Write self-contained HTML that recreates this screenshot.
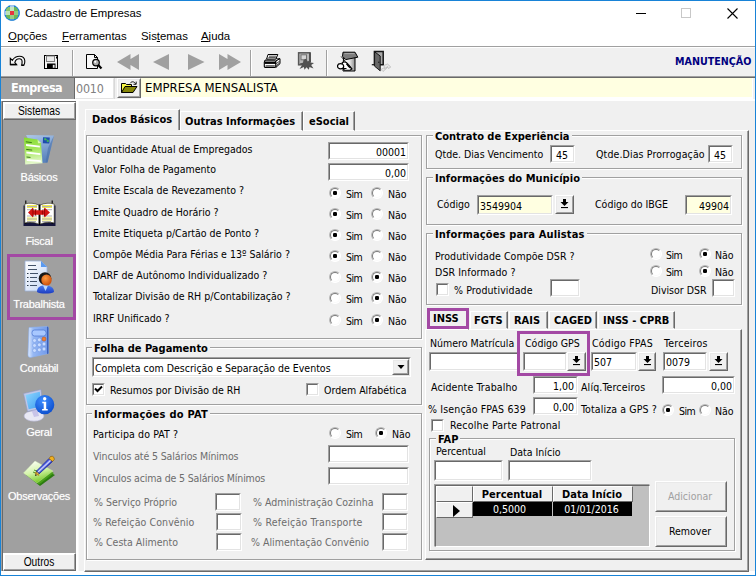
<!DOCTYPE html><html><head><meta charset="utf-8"><title>Cadastro de Empresas</title><style>

html,body{margin:0;padding:0}
body{width:756px;height:576px;overflow:hidden;background:#f0f0f0;position:relative;font-family:'DejaVu Sans Condensed','Liberation Sans',sans-serif;font-size:10.5px;color:#000}
div,span,svg{position:absolute;box-sizing:content-box}
.t{white-space:nowrap;line-height:13px;height:13px}
.b{font-weight:bold;font-size:11px}
.g{color:#6d6d6d}
.sk{border:1px solid;border-color:#696969 #e3e3e3 #e3e3e3 #696969;margin:1px}
.sk:before{content:"";position:absolute;left:-2px;top:-2px;right:-2px;bottom:-2px;border:1px solid;border-color:#a0a0a0 #fff #fff #a0a0a0;pointer-events:none}
.rb{background:#f0f0f0;border:1px solid;border-color:#e9e9e9 #a0a0a0 #a0a0a0 #e9e9e9;margin:1px}
.rb:before{content:"";position:absolute;left:-2px;top:-2px;right:-2px;bottom:-2px;border:1px solid;border-color:#fff #696969 #696969 #fff}
.gb{border:1px solid #a0a0a0;box-shadow:1px 1px 0 0 #fff, inset 1px 1px 0 0 #fff}
.gt{background:#f0f0f0;padding:0 2px;height:4px;line-height:4px}
.rd{width:10px;height:10px;border-radius:50%;background:#fff;border:1px solid;border-color:#b8b8b8 #fff #fff #b8b8b8}
.rd:before{content:"";position:absolute;left:0;top:0;width:8px;height:8px;border-radius:50%;border:1px solid;border-color:#7c7c7c #fafafa #fafafa #7c7c7c}
.rd i{position:absolute;left:3px;top:3px;width:4px;height:4px;background:#000;border-radius:1.3px}
.sm{letter-spacing:-0.6px}
.ck{width:9px;height:9px;background:#fff;border:1px solid;border-color:#696969 #e3e3e3 #e3e3e3 #696969;margin:1px}
.ck:before{content:"";position:absolute;left:-2px;top:-2px;right:-2px;bottom:-2px;border:1px solid;border-color:#a0a0a0 #fff #fff #a0a0a0}
.sb{color:#fff;font-family:'Liberation Sans',sans-serif;font-size:11px;letter-spacing:-0.25px;text-align:center;width:72px;left:3px;text-shadow:0 0 1px rgba(255,255,255,.55)}
.mn{font-family:'Liberation Sans',sans-serif;font-size:11.4px;line-height:15px;height:15px}
.mn u{text-decoration:underline}

</style></head><body>
<div style="left:0;top:0;width:754px;height:574px;border:1px solid #1883d7;z-index:50;pointer-events:none"></div>
<div style="left:1px;top:1px;width:754px;height:45px;background:#fff"></div>
<svg style="left:4px;top:5px" width="16" height="16" viewBox="0 0 16 16"><defs><clipPath id="cc"><circle cx="8" cy="8" r="7.9"/></clipPath><clipPath id="cg"><circle cx="8" cy="8" r="6.9"/></clipPath></defs>
<g clip-path="url(#cc)"><rect width="16" height="16" fill="#1a80d6"/><rect x="2" y="2" width="12" height="12" fill="#6cb856" clip-path="url(#cg)"/>
<rect x="6" y="0" width="4" height="2" fill="#a8c8f0"/><rect x="0" y="6" width="2" height="4" fill="#a4c4ee"/><rect x="14" y="6" width="2" height="4" fill="#4c98dc"/><rect x="6" y="14" width="4" height="2" fill="#4c98dc"/>
<rect x="6" y="2" width="4" height="4" fill="#c4e6c0"/><rect x="2" y="6" width="4" height="4" fill="#bce2b4"/><rect x="10" y="6" width="4" height="4" fill="#94cc80"/><rect x="6" y="10" width="4" height="4" fill="#98d084"/>
<rect x="2" y="2" width="4" height="4" fill="#84c46c" clip-path="url(#cg)"/>
<rect x="6" y="6" width="4" height="4" fill="#e8363e"/></g></svg>
<span class="t mn" style="left:25px;top:6px">Cadastro de Empresas</span>
<div style="left:636px;top:13px;width:10px;height:1px;background:#000"></div>
<div style="left:681px;top:8px;width:8px;height:8px;border:1px solid #c8c8c8"></div>
<svg style="left:726.5px;top:7.5px" width="11" height="11" viewBox="0 0 11 11"><path d="M0.5 0.5L10.5 10.5M10.5 0.5L0.5 10.5" stroke="#000" stroke-width="1.1"/></svg>
<span class="t mn" style="left:8px;top:29px"><u>O</u>pções</span>
<span class="t mn" style="left:62px;top:29px"><u>F</u>erramentas</span>
<span class="t mn" style="left:141px;top:29px">Sis<u>t</u>emas</span>
<span class="t mn" style="left:201px;top:29px"><u>A</u>juda</span>
<div style="left:1px;top:46px;width:754px;height:1px;background:#a0a0a0"></div>
<div style="left:1px;top:47px;width:754px;height:1px;background:#fff"></div>
<div style="left:72px;top:50px;width:1px;height:26px;background:#a0a0a0"></div><div style="left:73px;top:50px;width:1px;height:26px;background:#fff"></div>
<div style="left:250px;top:50px;width:1px;height:26px;background:#a0a0a0"></div><div style="left:251px;top:50px;width:1px;height:26px;background:#fff"></div>
<div style="left:326px;top:50px;width:1px;height:26px;background:#a0a0a0"></div><div style="left:327px;top:50px;width:1px;height:26px;background:#fff"></div>
<svg style="left:9px;top:55px" width="18" height="12" viewBox="0 0 18 12"><path d="M1.3 3.3 L1.3 9.6 L7.6 9.6 L5.8 7.6 C6.5 5.2 8.4 3.8 10.3 3.8 C12.2 3.8 13.2 5 13.1 6.8 C13.1 8.4 12.9 9.4 12.6 10.3 L14.9 10.3 C15.6 9 15.9 7.5 15.8 5.8 C15.5 3 13.5 1.3 10.5 1.3 C7.5 1.3 5 2.8 3.4 5.3 Z" fill="#f4f4f4" stroke="#000" stroke-width="1.1" stroke-linejoin="miter"/><path d="M1.3 9.6H7.6M12.6 10.3H14.9" stroke="#000" stroke-width="1.5"/></svg>
<svg style="left:44px;top:55px" width="14" height="14" viewBox="0 0 14 14"><rect x="0.5" y="0.5" width="13" height="13" fill="#f4f4f4" stroke="#000"/><rect x="2.5" y="1" width="8" height="5.5" fill="#ececec" stroke="#808080" stroke-width="1"/><rect x="3" y="8.5" width="8.5" height="5" fill="#000"/><rect x="8.8" y="9.8" width="1.8" height="3" fill="#e8e8e8"/><rect x="12" y="1.5" width="1" height="2" fill="#000"/></svg>
<svg style="left:86px;top:54px" width="17" height="16" viewBox="0 0 17 16"><path d="M0.5 0.5H8.5L11.5 3.5V14.5H0.5z" fill="#f8f8f8" stroke="#000"/><path d="M8.5 0.5V3.5H11.5" fill="none" stroke="#000"/><circle cx="10" cy="8.6" r="3.3" fill="#b0b0b0" stroke="#000" stroke-width="1.2"/><circle cx="9.2" cy="7.8" r="1.1" fill="#fff"/><path d="M12.2 11L15.5 14.5" stroke="#000" stroke-width="2.2"/></svg>
<svg style="left:117px;top:54px" width="22" height="16" viewBox="0 0 22 16"><path d="M13.5 0V16L0 8z M22 0V16L8.5 8z" fill="#a0a0a0"/></svg>
<svg style="left:153px;top:54px" width="16" height="16" viewBox="0 0 16 16"><path d="M16 0V16L0 8z" fill="#a0a0a0"/></svg>
<svg style="left:188px;top:54px" width="17" height="16" viewBox="0 0 17 16"><path d="M0 0V16L16.5 8z" fill="#a0a0a0"/></svg>
<svg style="left:219px;top:54px" width="22" height="16" viewBox="0 0 22 16"><path d="M0 0V16L13.5 8z M8.5 0V16L22 8z" fill="#a0a0a0"/></svg>
<svg style="left:263px;top:53px" width="18" height="16" viewBox="0 0 18 16"><path d="M3.6 6.1L1.3 8H12.9L17 5.7L14.5 5.7z" fill="#fff" stroke="#000" stroke-width=".9"/><path d="M5 1.5H14.8L12.9 6.1H3.6z" fill="#fff" stroke="#000" stroke-width="1"/><path d="M6 3.2H13.4M5.4 4.6H12.8" stroke="#000" stroke-width=".7"/><rect x="1.3" y="8" width="11.6" height="6.4" rx="1.2" fill="#fff" stroke="#000" stroke-width="1.1"/><path d="M12.9 8L17 5.7V10.7L12.9 14.4z" fill="#fff" stroke="#000" stroke-width="1"/><rect x="1.6" y="9" width="11.3" height="1.9" fill="#000"/><path d="M2.6 12.9H11.8" stroke="#000" stroke-width=".9"/><path d="M13.4 10.6L16.6 8.2M13.4 12.6L16.6 10" stroke="#000" stroke-width=".8"/></svg>
<svg style="left:297px;top:52px" width="18" height="18" viewBox="0 0 18 18"><rect x="1.6" y="0.8" width="11.2" height="12" fill="#b8b8b8" stroke="#585858" stroke-width="1.5"/><path d="M13.2 0.5V10" stroke="#404040" stroke-width="1.2"/><rect x="4" y="2.8" width="5.5" height="5" fill="#d4d4d4" stroke="#707070" stroke-width="1"/><path d="M9 6.8L10.8 9.5L14 7.2L13.3 10.6L17 11L14.2 13L16.5 16.5L12.5 15L11.8 17.8L9.5 15.2L7.5 17.8L6.8 15L2.5 17L5 13.2L2.5 11.5L6 10.8L6.5 8z" fill="#505050"/></svg>
<svg style="left:337px;top:51px" width="22" height="21" viewBox="0 0 22 21"><defs><linearGradient id="np" x1="0" y1="0" x2="1" y2="0"><stop offset="0" stop-color="#fff"/><stop offset=".55" stop-color="#e8e8e8"/><stop offset="1" stop-color="#8c8c8c"/></linearGradient></defs><path d="M6.5 7.2L18 6.3V20H6z" fill="url(#np)" stroke="#000" stroke-width="1"/><path d="M6 1.2H18L20.8 6.2L8.7 8.6L5.5 5.3z" fill="#7c7c7c" stroke="#000" stroke-width="1"/><path d="M7.5 2.6H17.5" stroke="#a8a8a8" stroke-width="1"/><path d="M4.2 5.5L8.5 10.5" stroke="#000" stroke-width=".9"/><path d="M5.2 11.6C7.5 10 10 11.5 11.5 13.5L15 17.8L13.2 19.2H7.5L6 17.6z" fill="#fff" stroke="#000" stroke-width="1.1"/><ellipse cx="3.6" cy="15.2" rx="3.1" ry="2.6" fill="#fff" stroke="#000" stroke-width="1.2"/><path d="M9.5 12.5C10.5 14 11.5 15.5 13.8 17" stroke="#000" stroke-width="1.5" fill="none"/><path d="M5 17.5H9.5" stroke="#000" stroke-width="1"/></svg>
<svg style="left:371px;top:50px" width="22" height="22" viewBox="0 0 22 22"><path d="M3.4 1.5H12.2V14.7H3.4z" fill="#a8a8a8" stroke="#181818" stroke-width="1.5"/><path d="M3.6 1.8L9.2 6V20.8L3.6 16.2z" fill="#686868" stroke="#181818" stroke-width="1"/><path d="M0.8 14.7H3.2" stroke="#181818" stroke-width="1.2"/><circle cx="7.8" cy="12.2" r=".7" fill="#181818"/><path d="M10 19.5L13.5 17.5L12.8 15.5L16.5 14L19.8 17L17.5 18.5L16.8 17.2L12 21.5z" fill="#e8e8e8" stroke="#b4b4b4" stroke-width=".7"/><path d="M13 19l4-2.5" stroke="#c0c0c0" stroke-width="1"/></svg>
<span class="t b" style="left:675px;top:55px;color:#000080;font-size:10.65px">MANUTENÇÃO</span>
<div style="left:1px;top:76px;width:754px;height:1px;background:#a0a0a0"></div>
<div style="left:1px;top:77px;width:754px;height:1px;background:#696969"></div>
<div style="left:1px;top:99px;width:754px;height:2px;background:#fff"></div>
<div style="left:1px;top:78px;width:73px;height:21px;background:#a0a0a0"></div>
<span class="t b" style="left:11px;top:80px;font-size:12.5px;letter-spacing:-0.55px;line-height:16px;height:16px;color:#fff">Empresa</span>
<div style="left:74px;top:78px;width:1px;height:21px;background:#696969"></div>
<div style="left:75px;top:78px;width:37px;height:19px;background:#fff;border:1px solid;border-color:#fff #e3e3e3 #e3e3e3 #fff"><span class="t" style="left:0px;top:2px;font-size:12.4px;letter-spacing:-0.2px;line-height:16px;height:16px;color:#808080">0010</span></div>
<div style="left:114px;top:78px;width:1px;height:21px;background:#d8d8d8"></div>
<div style="left:141px;top:78px;width:611px;height:19px;background:#ffffe1;border-bottom:2px solid #fff;border-right:1px solid #fff"><span class="t" style="left:4px;top:2px;font-size:13px;line-height:16px;height:16px">EMPRESA MENSALISTA</span></div>
<div class="rb " style="left:117px;top:78px;width:20px;height:16px"><svg style="left:2px;top:1px" width="17" height="13" viewBox="0 0 17 13"><path d="M0.5 11.5V2.5H4.5L5.5 3.5H10.5V5.5" fill="#f6f644" stroke="#000"/><path d="M0.5 11.5L4 5.5H16L12 11.5z" fill="#868608" stroke="#000"/><path d="M9.2 2.2C10.6 0.2 13.2 0.3 14.6 2.8" fill="none" stroke="#000" stroke-width=".9"/><path d="M15.2 0.6V3.3H12.5" fill="none" stroke="#000" stroke-width=".9"/></svg></div>
<div style="left:1px;top:101px;width:75px;height:470px;background:#a0a0a0"></div>
<div style="left:2px;top:101px;width:74px;height:1px;background:#696969"></div><div style="left:2px;top:101px;width:1px;height:470px;background:#696969"></div>
<div style="left:3px;top:102px;width:71px;height:16px;background:#f0f0f0;border:1px solid;border-color:#fff #696969 #696969 #fff;box-shadow:inset -1px -1px 0 #a0a0a0,inset 1px 1px 0 #fff"></div>
<span class="t" style="left:3px;width:72px;text-align:center;top:105px;font-family:'Liberation Sans',sans-serif;font-size:11px;transform:scale(.93,1.12);transform-origin:50% 80%">Sistemas</span>
<div style="left:3px;top:553px;width:71px;height:16px;background:#f0f0f0;border:1px solid;border-color:#fff #696969 #696969 #fff;box-shadow:inset -1px -1px 0 #a0a0a0,inset 1px 1px 0 #fff"></div>
<span class="t" style="left:3px;width:72px;text-align:center;top:556px;font-family:'Liberation Sans',sans-serif;font-size:11px;transform:scale(.93,1.12);transform-origin:50% 80%">Outros</span>
<span class="t sb" style="top:171px">Básicos</span>
<span class="t sb" style="top:235px">Fiscal</span>
<span class="t sb" style="top:298px">Trabalhista</span>
<span class="t sb" style="top:362px">Contábil</span>
<span class="t sb" style="top:426px">Geral</span>
<span class="t sb" style="top:490px">Observações</span>
<div style="left:7px;top:254px;width:63px;height:60px;border:3px solid #a349a4"></div>
<svg style="left:23px;top:134px" width="32" height="32" viewBox="0 0 32 32">
<defs><linearGradient id="b1" x1="0" y1="0" x2="0.3" y2="1"><stop offset="0" stop-color="#aec8ea"/><stop offset="1" stop-color="#5a84bd"/></linearGradient>
<linearGradient id="g1" x1="0" y1="0" x2="0.1" y2="1"><stop offset="0" stop-color="#86dc30"/><stop offset=".5" stop-color="#a8e860"/><stop offset="1" stop-color="#e4f8cc"/></linearGradient></defs>
<path d="M3 1L31 1.5L24.5 28.5L19 29z" fill="url(#b1)"/>
<path d="M25 14L31 1.5L24.5 28.5L22.5 28.7z" fill="#4a70a8" opacity=".6"/>
<path d="M20 3.2L26.8 3.5L26.3 9.5L19.8 9.2z" fill="#1d4cae"/>
<path d="M21.5 4.5h1.5v1.5h-1.5zM24 6.2h1.5v1.5h-1.5zM22.8 5.6l1.5 .1" fill="#3fb85a" stroke="#3fb85a" stroke-width=".6"/>
<path d="M1 3.5L14.5 5.6L18 9L19.5 29.3L2.2 30.4z" fill="url(#g1)"/>
<path d="M14.5 5.6L15 9.2L18 9z" fill="#d8f5b0"/>
<path d="M2.8 7.8l6 .8" stroke="#3a7a18" stroke-width="1" fill="none"/>
<path d="M3 10L16.8 11.8L16.9 13.6L3.1 12z" fill="#fff"/>
<path d="M3.2 15.4l6 .7" stroke="#3a7a18" stroke-width="1" fill="none"/>
<path d="M3.3 17.6L17.3 19.2L17.4 21L3.4 19.6z" fill="#fff"/>
<path d="M3.5 23l4 .4" stroke="#3a7a18" stroke-width="1" fill="none"/>
<path d="M3.6 25L17.8 26.3L17.9 28.1L3.7 27z" fill="#fff"/>
</svg>
<svg style="left:23px;top:200px" width="33" height="27" viewBox="0 0 33 27">
<path d="M0.5 5.5H32.5V26H0.5z" fill="#16163c"/>
<path d="M2.8 0.5V24M29.2 0.5V24" stroke="#000" stroke-width="1.1"/>
<path d="M1.8 4C6 2.6 12 3 16 5.2V24.2C12 22.2 6 21.6 1.8 23z" fill="#ffffff" stroke="#303018" stroke-width=".6"/>
<path d="M31.2 4C27 2.6 21 3 17 5.2V24.2C21 22.2 27 21.6 31.2 23z" fill="#ffffff" stroke="#303018" stroke-width=".6"/>
<path d="M4 5.5h10M4 7.5h10M4 18h10M4 20h10M19 5.5h10M19 7.5h10M19 18h10M19 20h10" stroke="#f0ec50" stroke-width="1.1"/>
<path d="M4 9.7h10M4 16h10M19 9.7h10M19 16h10M4 6.5h10M19 6.5h10M4 19h10M19 19h10M4 21.5h9M19 21.5h9" stroke="#909090" stroke-width=".7"/>
<path d="M16.5 4.5V25" stroke="#000" stroke-width="1.6"/>
<path d="M5 12.5L10 7.5V10.3H21.5V7.5L27 12.5L21.5 17.5V14.7H10V17.5z" fill="#d41414"/>
<path d="M10 8.5v8M12.5 9.5v6M19.5 10.5v4M21.5 8.5v8" stroke="#9a0606" stroke-width="1.1"/>
</svg>
<svg style="left:24px;top:260px" width="32" height="34" viewBox="0 0 32 34">
<defs><linearGradient id="d1" x1="0" y1="0" x2="1" y2="1"><stop offset="0" stop-color="#ffffff"/><stop offset="1" stop-color="#c4d6f4"/></linearGradient>
<radialGradient id="h1" cx=".4" cy=".35" r=".7"><stop offset="0" stop-color="#ff9a40"/><stop offset="1" stop-color="#c84a08"/></radialGradient>
<linearGradient id="bd" x1="0" y1="0" x2="0" y2="1"><stop offset="0" stop-color="#4a7cf0"/><stop offset="1" stop-color="#1c3cc0"/></linearGradient></defs>
<path d="M1 1H17L23 7V31H1z" fill="url(#d1)" stroke="#9ab0d8" stroke-width=".8"/>
<path d="M17 1L23 7H17z" fill="#5a9af0"/>
<path d="M4 5.5h8M4 9.5h9M6 13.5h8M6 17.5h7M6 21.5h7M6 25.5h7" stroke="#42526a" stroke-width="1.1"/>
<path d="M3 13.5h1.5M3 17.5h1.5M3 21.5h1.5M3 25.5h1.5" stroke="#283848" stroke-width="1.2"/>
<path d="M13 32C13 27 16 25.5 21 25.5C26 25.5 30 27 30 32C27 34 16 34 13 32z" fill="url(#bd)"/>
<path d="M19 25.5L21.5 31L24 25.5z" fill="#b8d8ff"/>
<circle cx="21" cy="18.5" r="6.3" fill="#181818"/>
<ellipse cx="22.5" cy="20" rx="5.2" ry="5.6" fill="url(#h1)"/>
</svg>
<svg style="left:27px;top:326px" width="23" height="32" viewBox="0 0 23 32">
<defs><linearGradient id="c1" x1="0" y1="0" x2="1" y2="0"><stop offset="0" stop-color="#e0ecff"/><stop offset=".25" stop-color="#96b8f4"/><stop offset="1" stop-color="#7098e8"/></linearGradient></defs>
<path d="M2 1.5L20 0.5Q21.5 0.5 21.5 2V27.5L3.5 31.5Q1 31.5 1 29z" fill="url(#c1)" stroke="#8cb0f0" stroke-width=".6"/>
<path d="M20 0.5Q21.5 0.5 21.5 2V27.5L20 28z" fill="#3c60b8"/>
<rect x="5" y="4" width="14" height="6" rx="2.5" fill="#a8c8ff" stroke="#4a74d0" stroke-width=".7"/>
<g fill="#c8dcff" stroke="#6890e0" stroke-width=".5"><circle cx="7.5" cy="14.5" r="1.9"/><circle cx="12.3" cy="13.8" r="1.9"/>
<circle cx="7.5" cy="19.5" r="1.9"/><circle cx="12.3" cy="18.8" r="1.9"/><circle cx="17" cy="18" r="1.9"/>
<circle cx="7.5" cy="24.5" r="1.9"/><circle cx="12.3" cy="23.8" r="1.9"/><circle cx="17" cy="23" r="1.9"/></g>
<circle cx="17" cy="13" r="2" fill="#f08030" stroke="#c05010" stroke-width=".5"/>
</svg>
<svg style="left:23px;top:389px" width="34" height="34" viewBox="0 0 34 34">
<defs><linearGradient id="m1" x1="0" y1="0" x2="1" y2="1"><stop offset="0" stop-color="#90d8ff"/><stop offset="1" stop-color="#3c9cf0"/></linearGradient>
<radialGradient id="i1" cx=".4" cy=".3" r=".8"><stop offset="0" stop-color="#3c8cff"/><stop offset="1" stop-color="#0848c8"/></radialGradient></defs>
<ellipse cx="11" cy="27" rx="10" ry="5.2" fill="#e8e8f4" stroke="#b0b0d0" stroke-width=".6"/>
<path d="M8 20L14 19L16 27L11 28z" fill="#c8c4e8"/>
<path d="M0.5 4.5L18 0.5L20 19L4.5 22.5z" fill="#c0c8e8" stroke="#9098c0" stroke-width=".6"/>
<path d="M2.5 6L16.8 2.8L18.3 17.5L5.7 20.3z" fill="url(#m1)"/>
<circle cx="21.7" cy="15.7" r="9.6" fill="url(#i1)"/>
<circle cx="21.7" cy="9.8" r="1.7" fill="#fff"/>
<path d="M19.3 12.8h3.9v7.2h1.5v1.4h-5.6v-1.4h1.6v-5.8h-1.4z" fill="#fff"/>
</svg>
<svg style="left:22px;top:453px" width="34" height="34" viewBox="0 0 34 34">
<defs><linearGradient id="o1" x1="0.2" y1="0" x2="0.6" y2="1"><stop offset="0" stop-color="#ffffff"/><stop offset=".5" stop-color="#d4f4a8"/><stop offset="1" stop-color="#6cc418"/></linearGradient>
<linearGradient id="p1" x1="0" y1="0" x2="1" y2="1"><stop offset=".36" stop-color="#2434c4"/><stop offset=".45" stop-color="#5868e4"/><stop offset=".5" stop-color="#dce0ff"/><stop offset=".57" stop-color="#3444cc"/><stop offset=".66" stop-color="#0c1470"/></linearGradient></defs>
<path d="M4 22L15 13L33 22L18 33z" fill="#2c7c10"/>
<path d="M3 21L14 11L32 20L17 31.5z" fill="#48a018"/>
<path d="M1.5 20L13 8L31 18L15 30z" fill="url(#o1)" stroke="#d0e8b0" stroke-width=".4"/>
<path d="M12 17l5 2M11 19l4 1.6" stroke="#2c7c10" stroke-width=".8"/>
<path d="M13.5 22.5L14.5 18L17.5 20.5z" fill="#e8c060" stroke="#000" stroke-width=".5"/>
<path d="M13.2 22.8l1.2-.6-.5-.6z" fill="#000"/>
<path d="M14.5 18L27 5.5L30.5 8.5L17.5 20.5z" fill="url(#p1)" stroke="#1828a0" stroke-width=".7"/>
<path d="M27 5.5L28.5 3.5Q30.5 2.5 32 4.5L32.3 6.5L30.5 8.5z" fill="#f0b020" stroke="#805000" stroke-width=".6"/>
<path d="M13 19.5L17 22.5" stroke="#c09020" stroke-width="1.4"/>
</svg>
<div style="left:76px;top:101px;width:2px;height:470px;background:#fff"></div><div style="left:78px;top:101px;width:1px;height:470px;background:#f8f8f8"></div>
<div style="left:1px;top:571px;width:754px;height:4px;background:#fff"></div>
<div style="left:84px;top:130px;width:663px;height:440px;border:1px solid;border-color:#fff #696969 #696969 #fff;box-shadow:inset -1px -1px 0 #a0a0a0"></div>
<div style="left:85px;top:109px;width:93px;height:20px;border:1px solid;border-color:#fff #696969 transparent #fff;box-shadow:inset -1px 0 0 #a0a0a0"></div>
<div style="left:86px;top:130px;width:94px;height:1px;background:#f0f0f0"></div>
<div style="left:180px;top:111px;width:121px;height:18px;border:1px solid;border-color:#fff #696969 transparent #fff;box-shadow:inset -1px 0 0 #a0a0a0"></div>
<div style="left:303px;top:111px;width:50px;height:18px;border:1px solid;border-color:#fff #696969 transparent #fff;box-shadow:inset -1px 0 0 #a0a0a0"></div>
<span class="t b" style="left:92px;top:113px;">Dados Básicos</span>
<span class="t b" style="left:185px;top:115px;">Outras Informações</span>
<span class="t b" style="left:309px;top:115px;">eSocial</span>
<div class="gb" style="left:86px;top:135px;width:334px;height:202px"></div>
<span class="t " style="left:93px;top:143px;">Quantidade Atual de Empregados</span>
<span class="t " style="left:93px;top:163px;">Valor Folha de Pagamento</span>
<span class="t " style="left:93px;top:184px;">Emite Escala de Revezamento ?</span>
<span class="t " style="left:93px;top:206px;">Emite Quadro de Horário ?</span>
<span class="t " style="left:93px;top:227px;">Emite Etiqueta p/Cartão de Ponto ?</span>
<span class="t " style="left:93px;top:248px;">Compõe Média Para Férias e 13º Salário ?</span>
<span class="t " style="left:93px;top:269px;">DARF de Autônomo Individualizado ?</span>
<span class="t " style="left:93px;top:290px;">Totalizar Divisão de RH p/Contabilização ?</span>
<span class="t " style="left:93px;top:312px;">IRRF Unificado ?</span>
<div class="sk " style="left:328px;top:142px;width:77px;height:14px;background:#fff"><span class="t" style="right:1px;top:2px">00001</span></div>
<div class="sk " style="left:328px;top:163px;width:77px;height:14px;background:#fff"><span class="t" style="right:1px;top:2px">0,00</span></div>
<div class="rd" style="left:329px;top:187px"><i></i></div>
<span class="t sm" style="left:346px;top:188px;">Sim</span>
<div class="rd" style="left:371px;top:187px"></div>
<span class="t " style="left:388px;top:188px;">Não</span>
<div class="rd" style="left:329px;top:208px"><i></i></div>
<span class="t sm" style="left:346px;top:209px;">Sim</span>
<div class="rd" style="left:371px;top:208px"></div>
<span class="t " style="left:388px;top:209px;">Não</span>
<div class="rd" style="left:329px;top:229px"><i></i></div>
<span class="t sm" style="left:346px;top:230px;">Sim</span>
<div class="rd" style="left:371px;top:229px"></div>
<span class="t " style="left:388px;top:230px;">Não</span>
<div class="rd" style="left:329px;top:250px"><i></i></div>
<span class="t sm" style="left:346px;top:251px;">Sim</span>
<div class="rd" style="left:371px;top:250px"></div>
<span class="t " style="left:388px;top:251px;">Não</span>
<div class="rd" style="left:329px;top:271px"></div>
<span class="t sm" style="left:346px;top:272px;">Sim</span>
<div class="rd" style="left:371px;top:271px"><i></i></div>
<span class="t " style="left:388px;top:272px;">Não</span>
<div class="rd" style="left:329px;top:292px"></div>
<span class="t sm" style="left:346px;top:293px;">Sim</span>
<div class="rd" style="left:371px;top:292px"><i></i></div>
<span class="t " style="left:388px;top:293px;">Não</span>
<div class="rd" style="left:329px;top:314px"></div>
<span class="t sm" style="left:346px;top:315px;">Sim</span>
<div class="rd" style="left:371px;top:314px"><i></i></div>
<span class="t " style="left:388px;top:315px;">Não</span>
<div class="gb" style="left:86px;top:347px;width:334px;height:56px"></div>
<span class="t b gt" style="left:92px;top:347px;">Folha de Pagamento</span>
<div class="sk " style="left:92px;top:357px;width:315px;height:16px;background:#fff"><span class="t" style="left:1px;top:3px">Completa com Descrição e Separação de Eventos</span></div>
<div class="rb " style="left:392px;top:359px;width:13px;height:12px"><svg style="left:3px;top:4px" width="8" height="4" viewBox="0 0 8 4"><path d="M0.5 0H7.5L4 4z" fill="#000"/></svg></div>
<div class="ck" style="left:92px;top:383px"><svg width="9" height="9" viewBox="0 0 9 9" style="position:absolute;left:0;top:0"><path d="M1 3.5 L3.5 6 L8 1.5" stroke="#000" stroke-width="2" fill="none"/></svg></div>
<span class="t " style="left:110px;top:384px;">Resumos por Divisão de RH</span>
<div class="ck" style="left:306px;top:383px"></div>
<span class="t " style="left:324px;top:384px;">Ordem Alfabética</span>
<div class="gb" style="left:86px;top:413px;width:334px;height:145px"></div>
<span class="t b gt" style="left:92px;top:413px;letter-spacing:.25px">Informações do PAT</span>
<span class="t " style="left:93px;top:428px;letter-spacing:.12px">Participa do PAT ?</span>
<div class="rd" style="left:329px;top:427px"></div>
<span class="t sm" style="left:346px;top:428px;">Sim</span>
<div class="rd" style="left:375px;top:427px"><i></i></div>
<span class="t " style="left:392px;top:428px;">Não</span>
<span class="t g" style="left:93px;top:450px;letter-spacing:-.13px">Vinculos até 5 Salários Mínimos</span>
<span class="t g" style="left:93px;top:472px;letter-spacing:-.15px">Vinculos acima de 5 Salários Mínimos</span>
<div class="sk " style="left:328px;top:445px;width:77px;height:14px;background:#fff"></div>
<div class="sk " style="left:328px;top:467px;width:77px;height:14px;background:#fff"></div>
<span class="t g" style="left:94px;top:496px;">% Serviço Próprio</span>
<span class="t g" style="left:253px;top:496px;">% Administração Cozinha</span>
<div class="sk " style="left:215px;top:493px;width:22px;height:14px;background:#fff"></div>
<div class="sk " style="left:382px;top:493px;width:22px;height:14px;background:#fff"></div>
<span class="t g" style="left:93px;top:516px;letter-spacing:.1px">% Refeição Convênio</span>
<span class="t g" style="left:253px;top:516px;letter-spacing:.2px">% Refeição Transporte</span>
<div class="sk " style="left:216px;top:513px;width:22px;height:14px;background:#fff"></div>
<div class="sk " style="left:382px;top:513px;width:22px;height:14px;background:#fff"></div>
<span class="t g" style="left:94px;top:536px;">% Cesta Alimento</span>
<span class="t g" style="left:251px;top:536px;">% Alimentação Convênio</span>
<div class="sk " style="left:216px;top:533px;width:22px;height:14px;background:#fff"></div>
<div class="sk " style="left:382px;top:533px;width:22px;height:14px;background:#fff"></div>
<div class="gb" style="left:426px;top:135px;width:314px;height:32px"></div>
<span class="t b gt" style="left:433px;top:135px;">Contrato de Experiência</span>
<span class="t " style="left:435px;top:148px;">Qtde. Dias Vencimento</span>
<div class="sk " style="left:550px;top:145px;width:21px;height:14px;background:#fff"><span class="t" style="left:4px;top:2px">45</span></div>
<span class="t " style="left:596px;top:148px;letter-spacing:.12px">Qtde.Dias Prorrogação</span>
<div class="sk " style="left:708px;top:145px;width:21px;height:14px;background:#fff"><span class="t" style="left:4px;top:2px">45</span></div>
<div class="gb" style="left:426px;top:177px;width:314px;height:46px"></div>
<span class="t b gt" style="left:433px;top:177px;letter-spacing:.06px">Informações do Município</span>
<span class="t " style="left:437px;top:198px;">Código</span>
<div class="sk " style="left:477px;top:195px;width:72px;height:16px;background:#ffffe1"><span class="t" style="left:1px;top:3px">3549904</span></div>
<div class="rb " style="left:555px;top:195px;width:15px;height:15px"><svg width="9" height="10" viewBox="0 0 9 10" style="position:absolute;left:50%;top:50%;margin:-6px 0 0 -4.5px"><path d="M3 0h3v3h2.5L4.5 7 0.5 3H3z" fill="#000"/><rect x="1" y="8" width="7" height="1.1" fill="#000"/></svg></div>
<span class="t " style="left:595px;top:198px;">Código do IBGE</span>
<div class="sk " style="left:685px;top:195px;width:43px;height:16px;background:#ffffe1"><span class="t" style="right:1px;top:3px">49904</span></div>
<div class="gb" style="left:426px;top:233px;width:314px;height:70px"></div>
<span class="t b gt" style="left:433px;top:233px;letter-spacing:.15px">Informações para Aulistas</span>
<span class="t " style="left:435px;top:250px;letter-spacing:.06px">Produtividade Compõe DSR ?</span>
<span class="t " style="left:435px;top:266px;letter-spacing:.1px">DSR Informado ?</span>
<div class="rd" style="left:650px;top:248px"></div>
<span class="t sm" style="left:666px;top:249px;">Sim</span>
<div class="rd" style="left:699px;top:248px"><i></i></div>
<span class="t " style="left:715px;top:249px;">Não</span>
<div class="rd" style="left:650px;top:265px"></div>
<span class="t sm" style="left:666px;top:266px;">Sim</span>
<div class="rd" style="left:699px;top:265px"><i></i></div>
<span class="t " style="left:715px;top:266px;">Não</span>
<div class="ck" style="left:436px;top:283px"></div>
<span class="t " style="left:454px;top:284px;letter-spacing:.1px">% Produtividade</span>
<div class="sk " style="left:550px;top:279px;width:26px;height:14px;background:#fff"></div>
<span class="t " style="left:651px;top:284px;">Divisor DSR</span>
<div class="sk " style="left:712px;top:279px;width:19px;height:14px;background:#fff"></div>
<div style="left:425px;top:329px;width:315px;height:229px;border:1px solid;border-color:#fff #696969 #696969 #fff;box-shadow:inset -1px -1px 0 #a0a0a0"></div>
<div style="left:427px;top:308px;width:40px;height:20px;border:1px solid;border-color:#fff #696969 transparent #fff;box-shadow:inset -1px 0 0 #a0a0a0"></div>
<span class="t b" style="left:433px;top:312px;">INSS</span>
<div style="left:470px;top:311px;width:36px;height:16px;border:1px solid;border-color:#fff #696969 transparent #fff;box-shadow:inset -1px 0 0 #a0a0a0"></div>
<span class="t b" style="left:474px;top:314px;">FGTS</span>
<div style="left:509px;top:311px;width:37px;height:16px;border:1px solid;border-color:#fff #696969 transparent #fff;box-shadow:inset -1px 0 0 #a0a0a0"></div>
<span class="t b" style="left:514px;top:314px;">RAIS</span>
<div style="left:549px;top:311px;width:46px;height:16px;border:1px solid;border-color:#fff #696969 transparent #fff;box-shadow:inset -1px 0 0 #a0a0a0"></div>
<span class="t b" style="left:554px;top:314px;">CAGED</span>
<div style="left:598px;top:311px;width:75px;height:16px;border:1px solid;border-color:#fff #696969 transparent #fff;box-shadow:inset -1px 0 0 #a0a0a0"></div>
<span class="t b" style="left:603px;top:314px;">INSS - CPRB</span>
<div style="left:427px;top:308px;width:36px;height:15px;border:3px solid #a349a4"></div>
<span class="t " style="left:430px;top:337px;">Número Matrícula</span>
<span class="t " style="left:525px;top:337px;">Código GPS</span>
<span class="t " style="left:592px;top:337px;letter-spacing:.2px">Código FPAS</span>
<span class="t " style="left:664px;top:337px;letter-spacing:.25px">Terceiros</span>
<div class="sk " style="left:429px;top:352px;width:86px;height:15px;background:#fff"></div>
<div class="sk " style="left:523px;top:352px;width:40px;height:15px;background:#fff"></div>
<div class="rb " style="left:567px;top:352px;width:15px;height:15px"><svg width="9" height="10" viewBox="0 0 9 10" style="position:absolute;left:50%;top:50%;margin:-6px 0 0 -4.5px"><path d="M3 0h3v3h2.5L4.5 7 0.5 3H3z" fill="#000"/><rect x="1" y="8" width="7" height="1.1" fill="#000"/></svg></div>
<div class="sk " style="left:591px;top:352px;width:42px;height:15px;background:#fff"><span class="t" style="left:1px;top:2px">507</span></div>
<div class="rb " style="left:638px;top:352px;width:14px;height:15px"><svg width="9" height="10" viewBox="0 0 9 10" style="position:absolute;left:50%;top:50%;margin:-6px 0 0 -4.5px"><path d="M3 0h3v3h2.5L4.5 7 0.5 3H3z" fill="#000"/><rect x="1" y="8" width="7" height="1.1" fill="#000"/></svg></div>
<div class="sk " style="left:663px;top:352px;width:40px;height:15px;background:#fff"><span class="t" style="left:1px;top:2px">0079</span></div>
<div class="rb " style="left:709px;top:352px;width:15px;height:15px"><svg width="9" height="10" viewBox="0 0 9 10" style="position:absolute;left:50%;top:50%;margin:-6px 0 0 -4.5px"><path d="M3 0h3v3h2.5L4.5 7 0.5 3H3z" fill="#000"/><rect x="1" y="8" width="7" height="1.1" fill="#000"/></svg></div>
<div style="left:517px;top:331px;width:67px;height:39px;border:3px solid #a349a4"></div>
<span class="t " style="left:431px;top:381px;letter-spacing:.12px">Acidente Trabalho</span>
<div class="sk " style="left:533px;top:376px;width:41px;height:14px;background:#fff"><span class="t" style="right:2px;top:2px">1,00</span></div>
<span class="t " style="left:581px;top:381px;letter-spacing:.15px">Alíq.Terceiros</span>
<div class="sk " style="left:662px;top:376px;width:69px;height:14px;background:#fff"><span class="t" style="right:1px;top:2px">0,00</span></div>
<span class="t " style="left:428px;top:403px;letter-spacing:.15px">% Isenção FPAS 639</span>
<div class="sk " style="left:533px;top:397px;width:41px;height:14px;background:#fff"><span class="t" style="right:2px;top:2px">0,00</span></div>
<span class="t " style="left:581px;top:403px;letter-spacing:.12px">Totaliza a GPS ?</span>
<div class="rd" style="left:662px;top:404px"><i></i></div>
<span class="t sm" style="left:679px;top:405px;">Sim</span>
<div class="rd" style="left:699px;top:404px"></div>
<span class="t " style="left:715px;top:405px;">Não</span>
<div class="ck" style="left:431px;top:419px"></div>
<span class="t " style="left:450px;top:419px;letter-spacing:.2px">Recolhe Parte Patronal</span>
<div class="gb" style="left:429px;top:438px;width:304px;height:111px"></div>
<span class="t b gt" style="left:436px;top:438px;">FAP</span>
<span class="t " style="left:436px;top:445px;">Percentual</span>
<span class="t " style="left:510px;top:446px;">Data Início</span>
<div class="sk " style="left:434px;top:460px;width:65px;height:17px;background:#fff"></div>
<div class="sk " style="left:508px;top:460px;width:80px;height:17px;background:#fff"></div>
<div style="left:434px;top:484px;width:214px;height:61px;background:#c0c0c0;border:1px solid;border-color:#a0a0a0 #fff #fff #a0a0a0"></div>
<div style="left:435px;top:485px;width:213px;height:60px;border:1px solid;border-color:#696969 transparent transparent #696969"></div>
<div style="left:436px;top:486px;width:35px;height:14px;background:#f0f0f0;border:1px solid;border-color:#fff #696969 #696969 #fff;"><span class="t " style="left:0px;width:35px;text-align:center;top:1px;color:#000"></span></div>
<div style="left:473px;top:486px;width:78px;height:14px;background:#f0f0f0;border:1px solid;border-color:#fff #696969 #696969 #fff;"><span class="t b" style="left:-1px;width:78px;text-align:center;top:1px;color:#000">Percentual</span></div>
<div style="left:553px;top:486px;width:78px;height:14px;background:#f0f0f0;border:1px solid;border-color:#fff #696969 #696969 #fff;"><span class="t b" style="left:-1px;width:78px;text-align:center;top:1px;color:#000">Data Início</span></div>
<div style="left:436px;top:502px;width:35px;height:14px;background:#f0f0f0;border:1px solid;border-color:#fff #696969 #696969 #fff;"><span class="t " style="left:0px;width:35px;text-align:center;top:1px;color:#000"><svg style="left:16px;top:1px" width="7" height="12" viewBox="0 0 7 12"><path d="M0 0L7 6L0 12z" fill="#000"/></svg></span></div>
<div style="left:473px;top:502px;width:79px;height:14px;background:#000;border-right:1px solid #c0c0c0;border-bottom:1px solid #c0c0c0;"><span class="t " style="left:-3px;width:79px;text-align:center;top:1px;color:#fff">0,5000</span></div>
<div style="left:553px;top:502px;width:79px;height:14px;background:#000;border-right:1px solid #c0c0c0;border-bottom:1px solid #c0c0c0;"><span class="t " style="left:-1px;width:79px;text-align:center;top:1px;color:#fff">01/01/2016</span></div>
<div class="rb " style="left:655px;top:481px;width:68px;height:27px"><span class="t" style="left:-1px;width:68px;text-align:center;top:7px;color:#a0a0a0">Adicionar</span></div>
<div class="rb " style="left:655px;top:516px;width:68px;height:27px"><span class="t" style="left:-1px;width:68px;text-align:center;top:7px">Remover</span></div>
</body></html>
